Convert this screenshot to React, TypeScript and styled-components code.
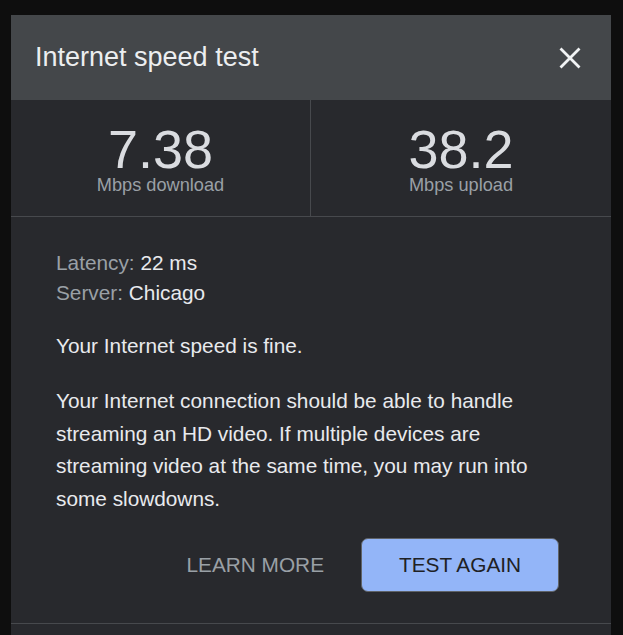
import styled, { createGlobalStyle } from "styled-components";

const GlobalStyle = createGlobalStyle`
	html, body {
		margin: 0;
		background: #0e0e0e;
		font-family: "Liberation Sans", Arial, sans-serif;
	}
`;

const Page = styled.div`
	padding: 15px 0 0 11px;
`;

const Dialog = styled.section`
	width: 600px;
	background: #28292d;
	color: #e8eaed;
	padding-bottom: 20px;
`;

const Header = styled.header`
	height: 85px;
	box-sizing: border-box;
	background: #44474a;
	display: flex;
	align-items: center;
	justify-content: space-between;
	padding: 0 30px 0 24px;
`;

const Title = styled.h1`
	margin: 0;
	font-size: 27px;
	font-weight: 400;
	color: #eceef0;
`;

const CloseButton = styled.button`
	background: none;
	border: 0;
	padding: 0;
	width: 22px;
	height: 22px;
	display: flex;
	cursor: pointer;
`;

const Stats = styled.div`
	display: grid;
	grid-template-columns: 1fr 1fr;
	border-bottom: 1px solid #47494d;
`;

const Stat = styled.div<{ $divider?: boolean }>`
	display: flex;
	flex-direction: column;
	align-items: center;
	padding: 24px 0 20px;
	border-right: ${p => (p.$divider ? "1px solid #47494d" : "0")};
`;

const Value = styled.div`
	font-size: 54px;
	line-height: 50px;
	color: #dadce0;
`;

const Unit = styled.div`
	font-size: 18.2px;
	line-height: 22px;
	color: #9aa0a6;
`;

const Body = styled.div`
	padding: 31px 45px 31px;
	border-bottom: 1px solid #47494d;
	font-size: 20.8px;
`;

const Info = styled.div`
	line-height: 30px;
	margin-bottom: 22px;
`;

const Label = styled.span`
	color: #9aa0a6;
`;

const Text = styled.p`
	margin: 0 0 22px;
	line-height: 32.8px;
	&:last-of-type {
		margin-bottom: 22px;
	}
`;

const Actions = styled.div`
	display: flex;
	justify-content: flex-end;
	align-items: center;
	gap: 8px;
	padding-right: 7px;
`;

const TextButton = styled.button`
	background: none;
	border: 0;
	font-family: inherit;
	font-size: 20.8px;
	color: #9aa0a6;
	padding: 0 29px;
	height: 54px;
	cursor: pointer;
`;

const PrimaryButton = styled.button`
	font-family: inherit;
	font-size: 20.8px;
	color: #202124;
	background: #93b5f8;
	border: 1px solid #5f6368;
	border-radius: 7px;
	width: 198px;
	height: 54px;
	cursor: pointer;
`;

export default function App() {
	return (
		<Page>
			<GlobalStyle />
			<Dialog>
				<Header>
					<Title>Internet speed test</Title>
					<CloseButton aria-label="Close">
						<svg width="22" height="22" viewBox="0 0 22 22">
							<path
								d="M1.5 1.5 L20.5 20.5 M20.5 1.5 L1.5 20.5"
								stroke="#f1f3f4"
								strokeWidth="2.8"
								fill="none"
							/>
						</svg>
					</CloseButton>
				</Header>
				<Stats>
					<Stat $divider>
						<Value>7.38</Value>
						<Unit>Mbps download</Unit>
					</Stat>
					<Stat>
						<Value>38.2</Value>
						<Unit>Mbps upload</Unit>
					</Stat>
				</Stats>
				<Body>
					<Info>
						<div>
							<Label>Latency:</Label> 22 ms
						</div>
						<div>
							<Label>Server:</Label> Chicago
						</div>
					</Info>
					<Text>Your Internet speed is fine.</Text>
					<Text>
						Your Internet connection should be able to handle streaming an HD
						video. If multiple devices are streaming video at the same time, you
						may run into some slowdowns.
					</Text>
					<Actions>
						<TextButton>LEARN MORE</TextButton>
						<PrimaryButton>TEST AGAIN</PrimaryButton>
					</Actions>
				</Body>
			</Dialog>
		</Page>
	);
}
